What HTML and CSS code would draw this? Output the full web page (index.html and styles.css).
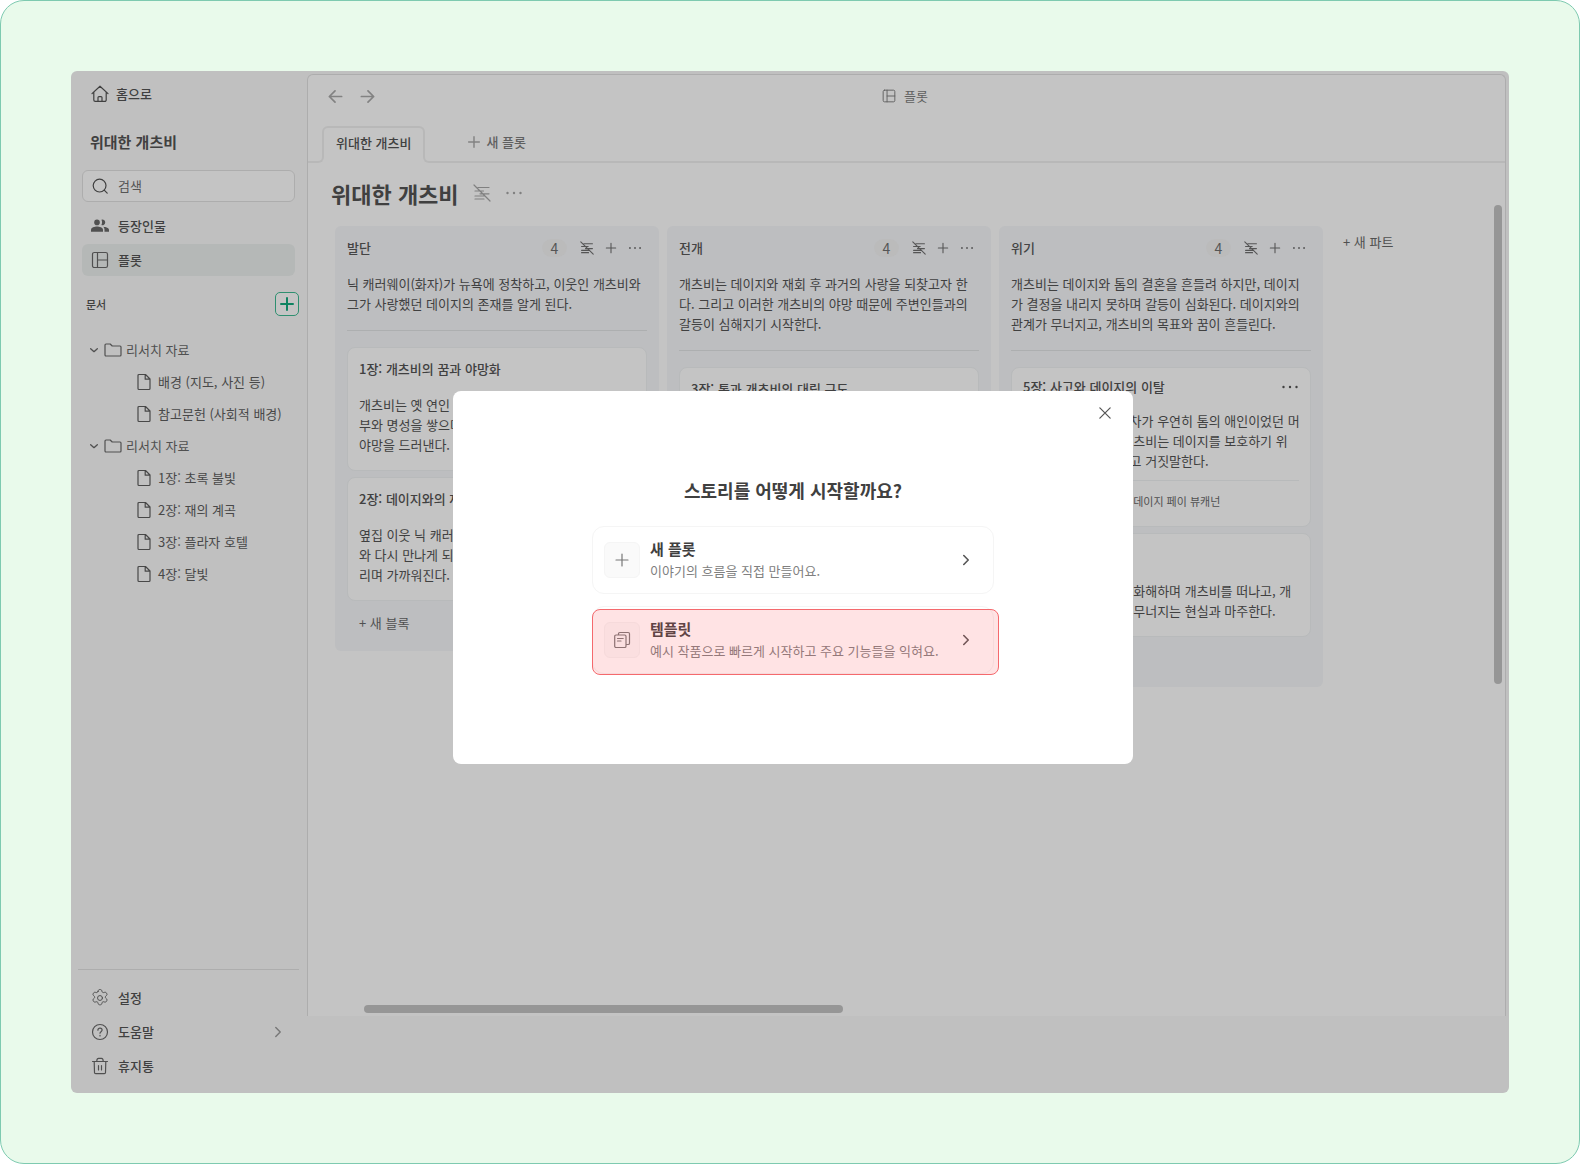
FILE: index.html
```html
<!DOCTYPE html>
<html lang="ko">
<head>
  <meta charset="UTF-8" />
  <meta name="viewport" content="width=device-width, initial-scale=1.0" />
  <title>위대한 개츠비</title>
  <link rel="stylesheet" href="styles.css">
</head>
<body>

  <svg class="sprite" aria-hidden="true">
    <symbol id="i-home" viewBox="0 0 18 18"><path d="M1 8.6 9 1.2l8 7.4M2.8 7.2V15a1.4 1.4 0 0 0 1.4 1.4h9.6a1.4 1.4 0 0 0 1.4-1.4V7.2M7 16.2v-3.6a1 1 0 0 1 1-1h2a1 1 0 0 1 1 1v3.6"/></symbol>
    <symbol id="i-search" viewBox="0 0 18 18"><circle cx="8.6" cy="8.6" r="6.4"/><path d="m13.2 13.2 3 3"/></symbol>
    <symbol id="i-people" viewBox="0 0 18 18"><g fill="currentColor" stroke="none"><circle cx="6" cy="5.4" r="2.8"/><path d="M0 14.8v-2c0-2.2 3.6-3.2 6-3.2s6 1 6 3.2v2z"/><path d="M10.4 8a2.8 2.8 0 1 0 0-5.2c.9 1.5.9 3.7 0 5.2zM12.3 9.7c2.4.3 5.7 1.200 5.700 3.100v2h-4.500v-2c0-1.300-.4-2.300-1.200-3.100z"/></g></symbol>
    <symbol id="i-plot" viewBox="0 0 18 18"><rect x="1.5" y="1.5" width="15" height="15" rx="1.8"/><path d="M6.5 1.5v15M6.500 9h10"/></symbol>
    <symbol id="i-plus" viewBox="0 0 18 18"><path d="M9 3v12M3 9h12"/></symbol>
    <symbol id="i-down" viewBox="0 0 18 18"><path d="m4 7 5 4.5L14 7"/></symbol>
    <symbol id="i-right" viewBox="0 0 18 18"><path d="m6.5 4 5 5-5 5"/></symbol>
    <symbol id="i-folder" viewBox="0 0 18 18"><path d="M1 4a1 1 0 0 1 1-1h4.2l2 2H16a1 1 0 0 1 1 1v8a1 1 0 0 1-1 1H2a1 1 0 0 1-1-1z"/></symbol>
    <symbol id="i-file" viewBox="0 0 18 18"><path d="M3 2.5a1 1 0 0 1 1-1h6.500L15 6v9.500a1 1 0 0 1-1 1H4a1 1 0 0 1-1-1zM10.200 1.500V6.200H15"/></symbol>
    <symbol id="i-gear" viewBox="1 1 22 22"><circle cx="12" cy="12" r="3"/><path d="M9.6 3.9c.2-1.300.7-2.200 1.700-2.200h1.400c1 0 1.500.9 1.700 2.200.2 1.200 1.300 1.800 2.500 1.400 1.200-.5 2.300-.5 2.800.4l.7 1.200c.5.900-.1 1.700-1.100 2.600-1 .8-1 2.200 0 3 1 .900 1.600 1.700 1.100 2.600l-.7 1.200c-.5.9-1.600.9-2.800.4-1.200-.4-2.300.2-2.500 1.400-.2 1.300-.7 2.200-1.700 2.200h-1.400c-1 0-1.500-.9-1.700-2.200-.2-1.200-1.300-1.800-2.500-1.400-1.200.5-2.300.5-2.800-.4l-.7-1.200c-.5-.9.1-1.700 1.100-2.600 1-.8 1-2.200 0-3-1-.9-1.600-1.700-1.100-2.600l.7-1.200c.5-.9 1.600-.9 2.800-.4 1.200.4 2.300-.2 2.500-1.400z"/></symbol>
    <symbol id="i-help" viewBox="0 0 18 18"><circle cx="9" cy="9" r="7.5"/><path d="M6.9 7.200c0-1.200.9-2 2.100-2s2.100.8 2.100 1.900c0 1.500-2.100 1.600-2.100 3.100M9 12.300v.6"/></symbol>
    <symbol id="i-trash" viewBox="0 0 18 18"><path d="M1.5 4.500h15M3.200 4.500l.3 11a1.200 1.200 0 0 0 1.200 1.200h8.600a1.200 1.200 0 0 0 1.200-1.200l.3-11M5.800 4.300c0-1.800.6-3 1.700-3h3c1.100 0 1.700 1.200 1.700 3M7.500 8.500v4.500M10.500 8.500v4.500"/></symbol>
    <symbol id="i-back" viewBox="0 0 18 18"><path d="M15.5 9h-13M8.500 3 2.500 9l6 6"/></symbol>
    <symbol id="i-forward" viewBox="0 0 18 18"><path d="M2.500 9h13M9.500 3l6 6-6 6"/></symbol>
    <symbol id="i-nodesc" viewBox="0 0 18 18"><path d="M5 3.500H16M2 7h8.500M7 9.800h9M2 12h10M2 15h9M1 1l16 16"/></symbol>
    <symbol id="i-dots" viewBox="0 0 18 18"><g fill="currentColor" stroke="none"><circle cx="2.5" cy="9" r="1.2"/><circle cx="9" cy="9" r="1.2"/><circle cx="15.5" cy="9" r="1.2"/></g></symbol>
    <symbol id="i-close" viewBox="0 0 18 18"><path d="m3.200 3.200 11.600 11.600M14.800 3.200 3.200 14.800"/></symbol>
    <symbol id="i-template" viewBox="0 0 18 18"><path d="M5.500 4V2.800A1.300 1.300 0 0 1 6.800 1.500h8.400a1.300 1.300 0 0 1 1.300 1.300v9.400a1.300 1.300 0 0 1-1.300 1.300H13M3 4h8.700A1.300 1.300 0 0 1 13 5.300v9.900a1.300 1.300 0 0 1-1.300 1.300H3a1.300 1.300 0 0 1-1.300-1.300V5.300A1.300 1.300 0 0 1 3 4zM4.500 7.500h5.700M4.500 10h3.500"/></symbol>
  </svg>

  <div class="frame">
    <div class="app">

      <aside class="sidebar">
        <a class="home" href="#"><svg class="icon"><use href="#i-home"/></svg>홈으로</a>
        <h2 class="work-title">위대한 개츠비</h2>

        <label class="search">
          <svg class="icon"><use href="#i-search"/></svg>
          <input type="search" placeholder="검색" aria-label="검색">
        </label>

        <nav class="menu">
          <a class="menu-item" href="#"><svg class="icon"><use href="#i-people"/></svg>등장인물</a>
          <a class="menu-item active" href="#"><svg class="icon"><use href="#i-plot"/></svg>플롯</a>
        </nav>

        <div class="docs-head">
          <span>문서</span>
          <button class="docs-add" type="button" aria-label="추가"><svg class="icon"><use href="#i-plus"/></svg></button>
        </div>

        <ul class="tree">
          <li><a class="folder" href="#"><svg class="icon caret"><use href="#i-down"/></svg><svg class="icon"><use href="#i-folder"/></svg>리서치 자료</a>
            <ul>
              <li><a class="file" href="#"><svg class="icon"><use href="#i-file"/></svg>배경 (지도, 사진 등)</a></li>
              <li><a class="file" href="#"><svg class="icon"><use href="#i-file"/></svg>참고문헌 (사회적 배경)</a></li>
            </ul>
          </li>
          <li><a class="folder" href="#"><svg class="icon caret"><use href="#i-down"/></svg><svg class="icon"><use href="#i-folder"/></svg>리서치 자료</a>
            <ul>
              <li><a class="file" href="#"><svg class="icon"><use href="#i-file"/></svg>1장: 초록 불빛</a></li>
              <li><a class="file" href="#"><svg class="icon"><use href="#i-file"/></svg>2장: 재의 계곡</a></li>
              <li><a class="file" href="#"><svg class="icon"><use href="#i-file"/></svg>3장: 플라자 호텔</a></li>
              <li><a class="file" href="#"><svg class="icon"><use href="#i-file"/></svg>4장: 달빛</a></li>
            </ul>
          </li>
        </ul>

        <nav class="menu footer-menu">
          <a class="menu-item" href="#"><svg class="icon"><use href="#i-gear"/></svg>설정</a>
          <a class="menu-item" href="#"><svg class="icon"><use href="#i-help"/></svg>도움말<svg class="icon more"><use href="#i-right"/></svg></a>
          <a class="menu-item" href="#"><svg class="icon"><use href="#i-trash"/></svg>휴지통</a>
        </nav>
      </aside>

      <main class="main">
        <header class="topbar">
          <div class="history">
            <button type="button" aria-label="뒤로"><svg class="icon"><use href="#i-back"/></svg></button>
            <button type="button" aria-label="앞으로"><svg class="icon"><use href="#i-forward"/></svg></button>
          </div>
          <div class="page-name"><svg class="icon"><use href="#i-plot"/></svg>플롯</div>
        </header>

        <div class="tabs">
          <span class="edge edge-left"></span>
          <button class="tab" type="button">위대한 개츠비</button>
          <span class="edge edge-right"></span>
          <button class="tab-new" type="button"><svg class="icon"><use href="#i-plus"/></svg>새 플롯</button>
        </div>

        <div class="plot-head">
          <h1>위대한 개츠비</h1>
          <button type="button" aria-label="설명 숨기기"><svg class="icon"><use href="#i-nodesc"/></svg></button>
          <button type="button" aria-label="더보기"><svg class="icon"><use href="#i-dots"/></svg></button>
        </div>

        <div class="board">
          <section class="part">
            <header class="part-head">
              <h3>발단</h3>
              <span class="count">4</span>
              <button type="button" aria-label="설명 숨기기"><svg class="icon"><use href="#i-nodesc"/></svg></button>
              <button type="button" aria-label="추가"><svg class="icon"><use href="#i-plus"/></svg></button>
              <button type="button" aria-label="더보기"><svg class="icon"><use href="#i-dots"/></svg></button>
            </header>
            <p class="part-desc">닉 캐러웨이(화자)가 뉴욕에 정착하고, 이웃인 개츠비와<br>그가 사랑했던 데이지의 존재를 알게 된다.</p>
            <article class="card">
              <h4>1장: 개츠비의 꿈과 야망화</h4>
              <p>개츠비는 옛 연인 데이지를 되찾기 위해<br>부와 명성을 쌓으며 화려한 파티를 열고<br>야망을 드러낸다.</p>
            </article>
            <article class="card">
              <h4>2장: 데이지와의 재회</h4>
              <p>옆집 이웃 닉 캐러웨이의 도움으로 데이지<br>와 다시 만나게 되고, 옛 추억을 떠올<br>리며 가까워진다.</p>
            </article>
            <button class="block-new" type="button">+ 새 블록</button>
          </section>

          <section class="part">
            <header class="part-head">
              <h3>전개</h3>
              <span class="count">4</span>
              <button type="button" aria-label="설명 숨기기"><svg class="icon"><use href="#i-nodesc"/></svg></button>
              <button type="button" aria-label="추가"><svg class="icon"><use href="#i-plus"/></svg></button>
              <button type="button" aria-label="더보기"><svg class="icon"><use href="#i-dots"/></svg></button>
            </header>
            <p class="part-desc">개츠비는 데이지와 재회 후 과거의 사랑을 되찾고자 한<br>다. 그리고 이러한 개츠비의 야망 때문에 주변인들과의<br>갈등이 심해지기 시작한다.</p>
            <article class="card">
              <h4>3장: 톰과 개츠비의 대립 구도</h4>
            </article>
          </section>

          <section class="part">
            <header class="part-head">
              <h3>위기</h3>
              <span class="count">4</span>
              <button type="button" aria-label="설명 숨기기"><svg class="icon"><use href="#i-nodesc"/></svg></button>
              <button type="button" aria-label="추가"><svg class="icon"><use href="#i-plus"/></svg></button>
              <button type="button" aria-label="더보기"><svg class="icon"><use href="#i-dots"/></svg></button>
            </header>
            <p class="part-desc">개츠비는 데이지와 톰의 결혼을 흔들려 하지만, 데이지<br>가 결정을 내리지 못하며 갈등이 심화된다. 데이지와의<br>관계가 무너지고, 개츠비의 목표와 꿈이 흔들린다.</p>
            <article class="card card-hover">
              <div class="card-head">
                <h4>5장: 사고와 데이지의 이탈</h4>
                <button type="button" aria-label="더보기"><svg class="icon"><use href="#i-dots"/></svg></button>
              </div>
              <p>데이지가 몰고 가던 차가 우연히 톰의 애인이었던 머<br>틀을 치어 죽이고, 개츠비는 데이지를 보호하기 위<br>해 그가 차를 몰았다고 거짓말한다.</p>
              <div class="cast"><span>등장인물</span><span>제이 개츠비</span><span>데이지 페이 뷰캐넌</span></div>
            </article>
            <article class="card">
              <h4>6장: 개츠비의 몰락</h4>
              <p>결국, 데이지는 톰과 화해하며 개츠비를 떠나고, 개<br>츠비는 꿈도, 사랑도 무너지는 현실과 마주한다.</p>
            </article>
            <button class="block-new" type="button">+ 새 블록</button>
          </section>

          <button class="part-new" type="button">+ 새 파트</button>
        </div>

        <div class="scroll scroll-y"></div>
        <div class="scroll scroll-x"></div>
      </main>

      <div class="overlay">
        <div class="modal" role="dialog" aria-modal="true" aria-labelledby="modal-title">
          <button class="close" type="button" aria-label="닫기"><svg class="icon"><use href="#i-close"/></svg></button>
          <h2 id="modal-title">스토리를 어떻게 시작할까요?</h2>
          <div class="options">
            <button class="option" type="button">
              <span class="option-icon"><svg class="icon"><use href="#i-plus"/></svg></span>
              <span class="option-text"><strong>새 플롯</strong><span>이야기의 흐름을 직접 만들어요.</span></span>
              <svg class="icon go"><use href="#i-right"/></svg>
            </button>
            <button class="option highlight" type="button">
              <span class="option-icon"><svg class="icon"><use href="#i-template"/></svg></span>
              <span class="option-text"><strong>템플릿</strong><span>예시 작품으로 빠르게 시작하고 주요 기능들을 익혀요.</span></span>
              <svg class="icon go"><use href="#i-right"/></svg>
            </button>
          </div>
        </div>
      </div>

    </div>
  </div>

</body>
</html>
```
FILE: styles.css
```css
* {
  box-sizing: border-box;
}

body {
  margin: 0;
  background: #fff;
  color: #404040;
  font-family: "Noto Sans CJK KR", "Noto Sans", sans-serif;
  font-size: 13px;
  line-height: 20px;
}

h1, h2, h3, h4, p, ul {
  margin: 0;
  padding: 0;
}

ul {
  list-style: none;
}

a {
  color: inherit;
  text-decoration: none;
}

button {
  padding: 0;
  border: 0;
  background: none;
  color: inherit;
  font: inherit;
  cursor: pointer;
}

.sprite {
  display: none;
}

.icon {
  display: block;
  flex: none;
  width: 18px;
  height: 18px;
  fill: none;
  stroke: currentColor;
  stroke-width: 1.2;
  stroke-linecap: round;
  stroke-linejoin: round;
}

.frame {
  display: flex;
  min-height: 100vh;
  padding: 70px;
  border: 1px solid #7ecab0;
  border-radius: 24px;
  background: #e9faeb;
}

.app {
  position: relative;
  display: flex;
  flex: 1;
  min-width: 0;
  padding-right: 3px;
  border-radius: 6px;
  background: #c0c0c0;
  overflow: hidden;
}

/* Sidebar */
.sidebar {
  display: flex;
  flex-direction: column;
  flex: none;
  width: 236px;
  padding: 7px 12px 11px 11px;
}

.home {
  display: flex;
  align-items: center;
  gap: 7px;
  height: 32px;
  padding-left: 9px;
  font-weight: 500;
}

.work-title {
  margin: 21px 0 17px 8px;
  font-size: 15px;
  font-weight: 700;
  line-height: 22px;
}

.search,
.menu-item {
  display: flex;
  align-items: center;
  gap: 9px;
  height: 32px;
  padding: 0 9px;
  border-radius: 6px;
}

.search {
  border: 1px solid #adadad;
  padding: 0 8px;
  background: #c4c4c4;
}

.search input {
  flex: 1;
  min-width: 0;
  padding: 0;
  border: 0;
  outline: 0;
  background: none;
  color: inherit;
  font: inherit;
}

.search input::placeholder {
  color: #555;
  opacity: 1;
}

.menu {
  display: flex;
  flex-direction: column;
  gap: 2px;
  margin-top: 8px;
  font-weight: 500;
}

.menu .icon {
  color: #505050;
}

.menu-item {
  padding-bottom: 1px;
}

.active {
  background: #b5b8b7;
}

.docs-head {
  display: flex;
  align-items: center;
  justify-content: space-between;
  margin: 16px -4px 18px 4px;
  font-size: 11px;
  font-weight: 500;
}

.docs-add {
  display: grid;
  place-items: center;
  width: 24px;
  height: 24px;
  border: 1px solid #2f8f70;
  border-radius: 5px;
  background: #c4c4c4;
  color: #0f8361;
}

.docs-add .icon {
  stroke-width: 2;
}

.tree {
  color: #505050;
}

.folder,
.file {
  display: flex;
  align-items: center;
  height: 32px;
}

.folder {
  gap: 5px;
  padding-left: 6px;
}

.folder .caret {
  width: 12px;
  height: 12px;
  stroke-width: 2;
}

.folder .icon {
  margin-right: -1px;
}

.file {
  gap: 5px;
  padding-left: 53px;
  color: #484848;
}

.footer-menu {
  margin: auto -4px 0 -4px;
  padding: 12px 4px 0 4px;
  border-top: 1px solid #adadad;
}

.menu .more {
  width: 16px;
  height: 16px;
  margin-left: auto;
  color: #777;
  stroke-width: 1.6;
}

/* Main area */
.main {
  position: relative;
  flex: 1;
  min-width: 0;
  margin: 3px 0 77px;
  border: 1px solid #adadad;
  border-bottom: 0;
  border-radius: 6px 6px 0 0;
  background: #c4c4c4;
  overflow: hidden;
}

.topbar {
  display: grid;
  grid-template-columns: 1fr auto 1fr;
  align-items: center;
  height: 42px;
  padding: 0 22px 0 19px;
  color: #606060;
}

.history {
  display: flex;
  gap: 15px;
  color: #828282;
}

.history .icon {
  width: 17px;
  height: 17px;
  stroke-width: 1.8;
}

.page-name {
  display: flex;
  align-items: center;
  gap: 8px;
}

.page-name .icon {
  width: 14px;
  height: 14px;
}

.tabs {
  display: grid;
  grid-template-columns: 16px auto 1fr;
  height: 37px;
  margin-top: 9px;
}

.edge {
  align-self: end;
  height: 10px;
  border-bottom: 2px solid #b8b8b8;
}

.edge-left {
  border-right: 2px solid #b8b8b8;
  border-bottom-right-radius: 6px;
}

.edge-right {
  grid-column: 3;
  grid-row: 1;
  border-left: 2px solid #b8b8b8;
  border-bottom-left-radius: 6px;
}

.tab {
  margin: 0 -2px 6px;
  padding: 0 12px;
  border: 2px solid #b8b8b8;
  border-bottom: 0;
  border-radius: 6px 6px 0 0;
  font-weight: 500;
}

.tab-new {
  display: flex;
  grid-column: 3;
  grid-row: 1;
  align-items: center;
  justify-self: start;
  gap: 4px;
  padding: 0 0 5px 43px;
  color: #606060;
  font-weight: 500;
}

.tab-new .icon {
  width: 16px;
  height: 16px;
  color: #828282;
  stroke-width: 1.6;
}

.plot-head {
  display: flex;
  align-items: center;
  gap: 14px;
  height: 32px;
  margin: 14px 0 0 23px;
  color: #808080;
}

.plot-head h1 {
  color: #404040;
  font-size: 22px;
  font-weight: 700;
  line-height: 32px;
}

.board {
  display: flex;
  align-items: flex-start;
  gap: 8px;
  margin: 17px 0 0 27px;
}

.part {
  flex: none;
  width: 324px;
  padding: 10px 12px 12px;
  border-radius: 6px;
  background: #bdbec0;
}

.part-head {
  display: flex;
  align-items: center;
  height: 24px;
  color: #555;
}

.part-head h3 {
  flex: 1;
  color: #444;
  font-size: 13px;
  font-weight: 500;
}

.count {
  width: 25px;
  margin-right: 8px;
  border-radius: 9px;
  background: #bbb;
  font-size: 14px;
  line-height: 18px;
  text-align: center;
}

.part-head button {
  display: grid;
  place-items: center;
  width: 24px;
  height: 24px;
}

.part-head .icon {
  width: 14px;
  height: 14px;
  stroke-width: 1.4;
}

.part-desc {
  margin: 14px 0 16px;
  white-space: nowrap;
}

.card {
  margin-bottom: 6px;
  padding: 11px 11px 15px;
  border: 1px solid #b8babb;
  border-radius: 8px;
  background: #c4c4c4;
  white-space: nowrap;
}

.part-desc + .card {
  position: relative;
  margin-top: 33px;
}

.part-desc + .card::before {
  content: "";
  position: absolute;
  top: -18px;
  left: -1px;
  right: -1px;
  height: 1px;
  background: #adafb0;
}

.card h4 {
  margin-bottom: 16px;
  font-size: 13px;
  font-weight: 500;
}

.part-desc + .card-hover {
  padding-top: 7px;
}

.card-head {
  display: flex;
  align-items: center;
  justify-content: space-between;
  height: 24px;
  margin-bottom: 12px;
}

.card-head h4 {
  margin: 0;
}

.cast {
  display: flex;
  gap: 8px;
  margin-top: 9px;
  padding-top: 10px;
  border-top: 1px solid #b8babb;
  color: #505050;
  font-size: 11px;
}

.block-new {
  display: block;
  height: 32px;
  padding: 0 12px;
  color: #505050;
}

.part-new {
  margin: 6px 0 0 12px;
  color: #505050;
  white-space: nowrap;
}

.scroll {
  position: absolute;
  border-radius: 4px;
  background: #969696;
}

.scroll-y {
  top: 130px;
  right: 3px;
  width: 8px;
  height: 479px;
}

.scroll-x {
  bottom: 3px;
  left: 56px;
  width: 479px;
  height: 8px;
}

/* Start dialog */
.overlay {
  position: absolute;
  inset: 0;
  display: flex;
  align-items: center;
  justify-content: center;
  padding: 0 0 9px 6px;
}

.modal {
  position: relative;
  width: 680px;
  padding: 85px 0 90px;
  border-radius: 8px;
  background: #fff;
}

.close {
  position: absolute;
  top: 14px;
  right: 20px;
  color: #555;
}

.close .icon {
  width: 16px;
  height: 16px;
  stroke-width: 1.4;
}

.modal h2 {
  font-size: 18px;
  font-weight: 700;
  line-height: 28px;
  text-align: center;
}

.options {
  display: flex;
  flex-direction: column;
  gap: 12px;
  width: 402px;
  margin: 22px auto 0;
}

.option {
  position: relative;
  display: flex;
  align-items: center;
  gap: 10px;
  height: 68px;
  padding: 2px 19px 2px 11px;
  border: 1px solid #f5f5f5;
  border-radius: 12px;
  text-align: left;
}

.option-icon {
  display: grid;
  place-items: center;
  width: 36px;
  height: 36px;
  border: 1px solid #f5f5f5;
  border-radius: 6px;
  background: #fafafa;
  color: #777;
}

.option-text {
  display: flex;
  flex: 1;
  flex-direction: column;
  gap: 2px;
  color: #808080;
  white-space: nowrap;
}

.option-text strong {
  color: #404040;
  font-size: 15px;
  font-weight: 700;
}

.go {
  width: 16px;
  height: 16px;
  color: #555;
  stroke-width: 1.8;
}

/* Red marker drawn over the recommended option */
.highlight::after {
  content: "";
  position: absolute;
  inset: 2px -6px -2px -1px;
  border: 1px solid #f5696d;
  border-radius: 8px;
  background: rgba(255, 90, 95, 0.17);
}
```
